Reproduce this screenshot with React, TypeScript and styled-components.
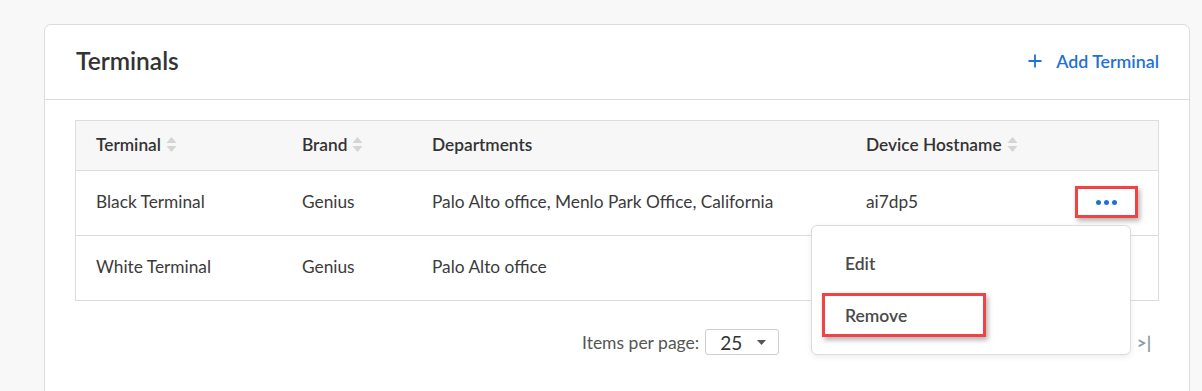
import React from "react";
import styled, { createGlobalStyle } from "styled-components";

const Global = createGlobalStyle`
  html, body {
    margin: 0;
    padding: 0;
    background: #f8f8f8;
    font-family: Lato, "Open Sans", Arial, sans-serif;
    color: #333;
  }
`;

interface TerminalRow {
  name: string;
  brand: string;
  departments: string;
  hostname: string;
}

const rows: TerminalRow[] = [
  { name: "Black Terminal", brand: "Genius", departments: "Palo Alto office, Menlo Park Office, California", hostname: "ai7dp5" },
  { name: "White Terminal", brand: "Genius", departments: "Palo Alto office", hostname: "" },
];

function SortIcon() {
  return (
    <svg width="11" height="17" viewBox="0 0 11 17">
      <path d="M5.5 1 L10.5 7 L0.5 7 Z" fill="#d5d5d5" />
      <path d="M5.5 16 L10.5 10 L0.5 10 Z" fill="#d5d5d5" />
    </svg>
  );
}

export default function App() {
  return (
    <>
      <Global />
      <Page>
        <Card>
          <CardHeader>
            <Title>Terminals</Title>
            <AddLink>
              <svg width="14" height="14" viewBox="0 0 14 14">
                <path d="M7 0.5 V13.5 M0.5 7 H13.5" stroke="#1f72d4" strokeWidth="1.8" />
              </svg>
              Add Terminal
            </AddLink>
          </CardHeader>

          <Table>
            <Row $head>
              <Cell $head>Terminal <SortIcon /></Cell>
              <Cell $head>Brand <SortIcon /></Cell>
              <Cell $head>Departments</Cell>
              <Cell $head>Device Hostname <SortIcon /></Cell>
              <Cell />
            </Row>
            {rows.map((r, i) => (
              <Row key={r.name}>
                <Cell>{r.name}</Cell>
                <Cell>{r.brand}</Cell>
                <Cell>{r.departments}</Cell>
                <Cell>{r.hostname}</Cell>
                <ActionCell>
                  {i === 0 && (
                    <MenuAnchor>
                      <MoreButton>
                        <span />
                        <span />
                        <span />
                      </MoreButton>
                      <Menu>
                        <MenuItem>Edit</MenuItem>
                        <MenuItem $marked>Remove</MenuItem>
                      </Menu>
                    </MenuAnchor>
                  )}
                </ActionCell>
              </Row>
            ))}
          </Table>

          <Pager>
            <PerPage>
              Items per page:
              <Select>
                25
                <svg width="9" height="5" viewBox="0 0 9 5">
                  <path d="M0 0 H9 L4.5 5 Z" fill="#555" />
                </svg>
              </Select>
            </PerPage>
            <Range>1 - 2 of 2</Range>
            <NavButton>|&lt;</NavButton>
            <NavButton>&lt;</NavButton>
            <NavButton>&gt;</NavButton>
            <NavButton>&gt;|</NavButton>
          </Pager>
        </Card>
      </Page>
    </>
  );
}

const Page = styled.div`
  padding: 24px 12px 0 44px;
  height: 391px;
  box-sizing: border-box;
  overflow: hidden;
`;

const Card = styled.div`
  background: #fff;
  border: 1px solid #dcdcdc;
  border-radius: 7px;
  height: 420px;
  box-sizing: border-box;
`;

const CardHeader = styled.div`
  display: flex;
  align-items: center;
  justify-content: space-between;
  height: 74px;
  padding: 0 30px 0 31px;
  border-bottom: 1px solid #dcdcdc;
`;

const Title = styled.div`
  font-size: 24.5px;
  font-weight: 600;
  color: #333;
  margin-top: -3px;
`;

const AddLink = styled.div`
  display: flex;
  align-items: center;
  gap: 14px;
  color: #1f72d4;
  font-size: 17.8px;
  font-weight: 600;
  margin-top: -3px;
`;

const Table = styled.div`
  margin: 20px 30px 0 30px;
  border: 1px solid #dcdcdc;
  border-bottom: none;
`;

const Row = styled.div<{ $head?: boolean }>`
  display: grid;
  grid-template-columns: 206px 130px 434px 1fr 120px;
  padding-left: 20px;
  height: ${(p) => (p.$head ? "49px" : "64px")};
  background: ${(p) => (p.$head ? "#f7f7f7" : "#fff")};
  border-bottom: 1px solid #dcdcdc;
`;

const Cell = styled.div<{ $head?: boolean }>`
  display: flex;
  align-items: center;
  gap: 5px;
  font-size: 17.3px;
  font-weight: ${(p) => (p.$head ? 600 : 400)};
  color: ${(p) => (p.$head ? "#333" : "#3b3b3b")};
  white-space: nowrap;
  margin-top: -3px;
`;

const ActionCell = styled.div`
  display: flex;
  align-items: center;
  justify-content: flex-end;
  padding-right: 20px;
`;

const MenuAnchor = styled.div`
  position: relative;
  margin-top: -2px;
`;

const MoreButton = styled.div`
  display: flex;
  align-items: center;
  justify-content: center;
  gap: 3px;
  width: 63px;
  height: 32px;
  box-sizing: border-box;
  border: 3px solid #f04444;
  box-shadow: 2px 3px 5px rgba(0, 0, 0, 0.3);
  background: #fff;

  span {
    width: 5px;
    height: 5px;
    border-radius: 50%;
    background: #1f72d4;
  }
`;

const Menu = styled.div`
  position: absolute;
  top: calc(100% + 7px);
  right: 7px;
  width: 320px;
  height: 130px;
  box-sizing: border-box;
  padding: 15px 10px;
  background: #fff;
  border: 1px solid #dcdcdc;
  border-radius: 6px;
  box-shadow: 0 2px 6px rgba(0, 0, 0, 0.08);
  z-index: 5;
  display: flex;
  flex-direction: column;
  gap: 8px;
`;

const MenuItem = styled.div<{ $marked?: boolean }>`
  display: flex;
  align-items: center;
  width: 164px;
  height: 44px;
  box-sizing: border-box;
  padding-left: 20px;
  font-size: 17.5px;
  font-weight: 600;
  color: #4a4a4a;
  border: 3px solid ${(p) => (p.$marked ? "#f04444" : "transparent")};
  box-shadow: ${(p) => (p.$marked ? "2px 3px 5px rgba(0, 0, 0, 0.3)" : "none")};
`;

const Pager = styled.div`
  display: flex;
  align-items: center;
  margin: 28px 30px 0 0;
  padding-left: 537px;
  font-size: 17.5px;
  color: #555;
`;

const PerPage = styled.div`
  display: flex;
  align-items: center;
  gap: 6px;
  color: #555;
`;

const Select = styled.div`
  display: flex;
  align-items: center;
  justify-content: space-between;
  width: 74px;
  height: 26px;
  box-sizing: border-box;
  padding: 0 12px 0 14px;
  border: 1px solid #cfcfcf;
  border-radius: 3px;
  font-size: 19px;
  color: #333;
`;

const Range = styled.div`
  margin-left: 60px;
  flex: 1;
`;

const NavButton = styled.div`
  width: 30px;
  text-align: center;
  color: #8d99a6;
  font-weight: 700;
  font-size: 17px;
  margin-left: 2px;
`;
